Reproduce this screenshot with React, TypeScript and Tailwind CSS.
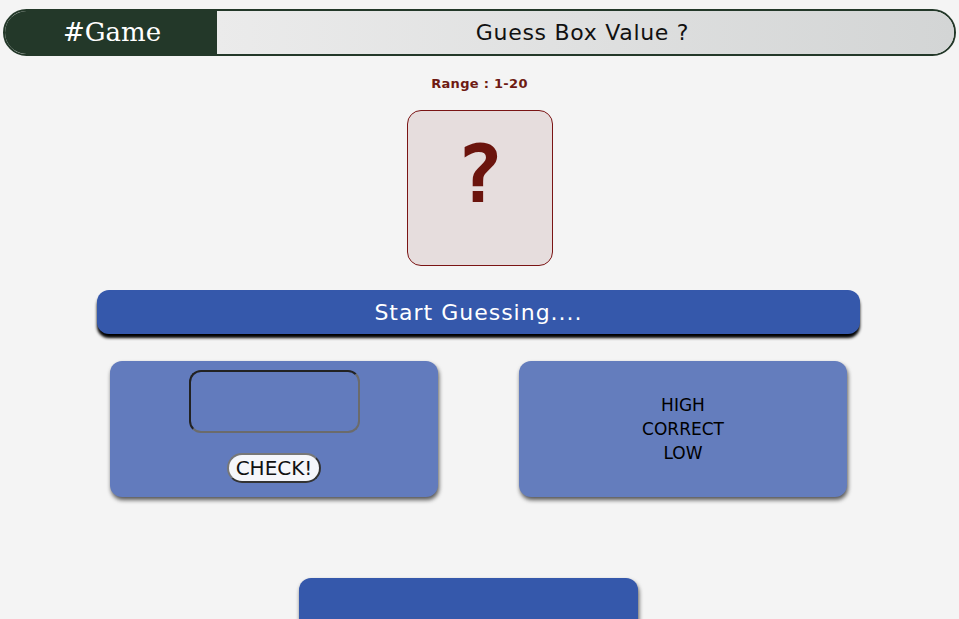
import React from "react";

export default function App() {
  return (
    <div className="h-[619px] w-full bg-[#f4f4f4] overflow-hidden" style={{ fontFamily: '"DejaVu Sans", sans-serif' }}>
      <div className="pt-[9px] px-[3px]">
        <div className="flex h-[47px] rounded-full border-2 border-[#233829] overflow-hidden">
          <div className="w-[212px] bg-[#233829] flex items-center justify-center text-white text-[26px] pl-[2px]" style={{ fontFamily: '"DejaVu Serif", serif' }}>
            #Game
          </div>
          <div className="flex-1 flex items-center justify-center bg-gradient-to-r from-[#ebebeb] to-[#d3d5d5] text-[#111] text-[22px] tracking-[0.7px] pr-[6px]">
            Guess Box Value ?
          </div>
        </div>
      </div>

      <div className="flex flex-col items-center">
        <div className="mt-[18px] h-[20px] flex items-center text-[13px] font-bold text-[#6e1a12] tracking-[0.3px]">
          Range : 1-20
        </div>
        <div className="mt-[16px] w-[146px] h-[156px] rounded-[14px] border border-[#7a1414] bg-[#e6dddd] flex items-center justify-center">
          <span className="text-[#6b140d] text-[80px] leading-none font-bold mb-[26px]" style={{ fontFamily: '"DejaVu Sans Mono", monospace' }}>?</span>
        </div>
      </div>

      <div className="mt-[24px] ml-[97px] w-[763px] h-[44px] rounded-[12px] bg-[#3558ab] shadow-[0_4px_3px_#000] flex items-center justify-center text-white text-[22px] tracking-[1px]">
        Start Guessing....
      </div>

      <div className="mt-[27px] flex ml-[110px] gap-[81px]">
        <div className="w-[328px] h-[136px] rounded-[12px] bg-[#627bbd] shadow-[1px_3px_4px_rgba(0,0,0,0.65)] flex flex-col items-center pt-[9px]">
          <div className="w-[171px] h-[63px] rounded-[12px] border-2 border-t-[#222] border-l-[#222] border-b-[#6b6b6b] border-r-[#6b6b6b]" />
          <button className="mt-[20px] h-[30px] px-[7px] rounded-full bg-[#f5f6fa] border-2 border-[#333] border-t-[#777] border-l-[#777] text-[#111] text-[20px] leading-none flex items-center">
            CHECK!
          </button>
        </div>
        <div className="w-[328px] h-[136px] rounded-[12px] bg-[#647dbd] shadow-[1px_3px_4px_rgba(0,0,0,0.65)] flex flex-col items-center justify-center text-[17px] leading-[24px] text-black">
          <div>HIGH</div>
          <div>CORRECT</div>
          <div>LOW</div>
        </div>
      </div>

      <div className="mt-[81px] ml-[299px] w-[339px] h-[80px] rounded-[12px] bg-[#3558ab] shadow-[1px_3px_4px_rgba(0,0,0,0.65)]" />
    </div>
  );
}
